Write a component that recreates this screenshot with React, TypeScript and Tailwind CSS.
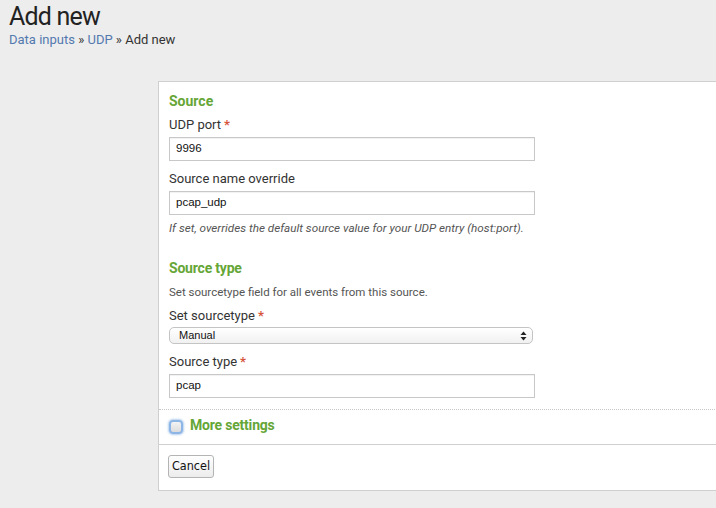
import React from "react";

const roboto = { fontFamily: "Roboto, 'Liberation Sans', sans-serif" };

function Req() {
  return <span className="text-[#d6563c] font-bold ml-[3px]">*</span>;
}

function Label({ children, mt }: { children: React.ReactNode; mt: string }) {
  return (
    <div className={`${mt} h-[20px] leading-[20px] text-[13px] text-[#333]`}>{children}</div>
  );
}

function TextInput({ value }: { value: string }) {
  return (
    <div className="mt-[2px] w-[366px] h-[24px] border border-[#c8c8c8] bg-white shadow-[inset_0_1px_1px_rgba(0,0,0,0.06)] flex items-center pl-[6px] text-[11.5px] text-[#111] font-['Liberation_Sans',Arial,sans-serif]">
      {value}
    </div>
  );
}

export default function App() {
  return (
    <div className="w-[716px] h-[508px] overflow-hidden bg-[#ededed] relative" style={roboto}>
      <div className="pl-[9px] pt-[2px]">
        <div className="text-[25px] leading-[30px] text-[#222] font-normal tracking-[-0.8px]">Add new</div>
        <div className="text-[13px] leading-[16px] mt-[0px] text-[#333]">
          <span className="text-[#5379af]">Data inputs</span>
          <span> » </span>
          <span className="text-[#5379af]">UDP</span>
          <span> » Add new</span>
        </div>
      </div>

      <div className="mt-[33px] ml-[158px] w-[600px] bg-white border border-[#cfcfcf]">
        <div className="pl-[10px] pt-[9px] pb-[11px] border-b border-dotted border-[#c8c8c8]">
          <div className="h-[20px] leading-[20px] text-[14px] font-bold text-[#65a637]">Source</div>
          <Label mt="mt-[4px]">
            UDP port<Req />
          </Label>
          <TextInput value="9996" />
          <Label mt="mt-[8px]">Source name override</Label>
          <TextInput value="pcap_udp" />
          <div className="mt-[4px] h-[18px] leading-[18px] text-[11.7px] italic text-[#555]">
            If set, overrides the default source value for your UDP entry (host:port).
          </div>
          <div className="mt-[21px] h-[20px] leading-[20px] text-[14px] font-bold text-[#65a637] tracking-[-0.2px]">
            Source type
          </div>
          <div className="mt-[5px] h-[18px] leading-[18px] text-[11.5px] text-[#555]">
            Set sourcetype field for all events from this source.
          </div>
          <Label mt="mt-[5px]">
            Set sourcetype<Req />
          </Label>
          <div className="mt-[1px] w-[364px] h-[17px] rounded-[5px] border border-[#c4c4c4] bg-gradient-to-b from-white to-[#f1f1f1] flex items-center justify-between pl-[9px] pr-[5px] text-[11px] text-[#111] font-['Liberation_Sans',Arial,sans-serif]">
            <span>Manual</span>
            <svg width="7" height="10" viewBox="0 0 7 10">
              <path d="M3.5 0.5 L6.5 4 L0.5 4 Z" fill="#222" />
              <path d="M3.5 9.5 L6.5 6 L0.5 6 Z" fill="#222" />
            </svg>
          </div>
          <Label mt="mt-[8px]">
            Source type<Req />
          </Label>
          <TextInput value="pcap" />
        </div>

        <div className="h-[35px] pl-[10px] flex items-center border-b border-[#cfcfcf]">
          <div className="w-[14px] h-[14px] rounded-[4px] border-[2px] border-[#8db5e6] bg-gradient-to-b from-[#f4f4f4] to-[#dcdcdc] shadow-[0_0_2px_1px_rgba(90,150,220,0.45)]" />
          <span className="ml-[7px] text-[14px] font-bold text-[#65a637] -mt-[3px] tracking-[-0.2px]">More settings</span>
        </div>

        <div className="pl-[9px] pt-[10px] pb-[12px]">
          <div className="w-[46px] h-[23px] rounded-[3px] border border-[#b4b4b4] bg-gradient-to-b from-white to-[#ececec] flex items-center justify-center text-[12.5px] text-[#111] font-['DejaVu_Sans_Condensed','DejaVu_Sans',sans-serif]">
            Cancel
          </div>
        </div>
      </div>
    </div>
  );
}
